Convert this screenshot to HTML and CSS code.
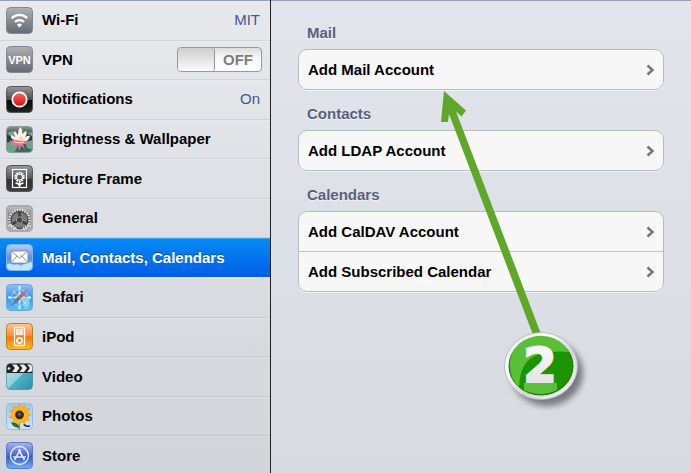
FILE: index.html
```html
<!DOCTYPE html>
<html lang="en">
<head>
<meta charset="utf-8">
<title>Settings</title>
<link rel="stylesheet" href="styles.css">
</head>
<body>
<svg class="defs" width="0" height="0" aria-hidden="true">
  <defs>
    <linearGradient id="grey" x2="0" y2="1"><stop offset="0" stop-color="#b0b1b4"/><stop offset=".5" stop-color="#888b90"/><stop offset="1" stop-color="#626b77"/></linearGradient>
    <linearGradient id="black" x2="0" y2="1"><stop offset="0" stop-color="#999"/><stop offset=".5" stop-color="#4b4b4b"/><stop offset=".52" stop-color="#080808"/><stop offset="1" stop-color="#222"/></linearGradient>
    <linearGradient id="frame" x2="0" y2="1"><stop offset="0" stop-color="#999"/><stop offset=".5" stop-color="#555"/><stop offset=".52" stop-color="#333"/><stop offset="1" stop-color="#3c3c3c"/></linearGradient>
    <linearGradient id="steel" x2="0" y2="1"><stop offset="0" stop-color="#c8c8c8"/><stop offset=".5" stop-color="#777"/><stop offset="1" stop-color="#bbb"/></linearGradient>
    <linearGradient id="sky" x2="0" y2="1"><stop offset="0" stop-color="#bfd2f5"/><stop offset=".5" stop-color="#5e94e8"/><stop offset="1" stop-color="#66c8ee"/></linearGradient>
    <linearGradient id="ocean" x2="0" y2="1"><stop offset="0" stop-color="#8dc0fb"/><stop offset=".5" stop-color="#3b93ee"/><stop offset="1" stop-color="#5cc5f7"/></linearGradient>
    <linearGradient id="orange" x2="0" y2="1"><stop offset="0" stop-color="#ffc79a"/><stop offset=".48" stop-color="#fb8b35"/><stop offset=".52" stop-color="#f77509"/><stop offset="1" stop-color="#ffc11c"/></linearGradient>
    <linearGradient id="teal" x2="1" y2="1"><stop offset="0" stop-color="#b5e6ee"/><stop offset=".5" stop-color="#8fd0de"/><stop offset=".52" stop-color="#4fb0c6"/><stop offset="1" stop-color="#2b8faa"/></linearGradient>
    <linearGradient id="pale" x2="0" y2="1"><stop offset="0" stop-color="#9cc9f2"/><stop offset="1" stop-color="#cfe5fa"/></linearGradient>
    <linearGradient id="store" x2="0" y2="1"><stop offset="0" stop-color="#a9b5ef"/><stop offset=".48" stop-color="#5067d4"/><stop offset=".52" stop-color="#3554cc"/><stop offset="1" stop-color="#6fb2f5"/></linearGradient>
    <linearGradient id="pond" x2="0" y2="1"><stop offset="0" stop-color="#8a9c98"/><stop offset=".4" stop-color="#223b36"/><stop offset="1" stop-color="#3d7463"/></linearGradient>
    <linearGradient id="red" x2="0" y2="1"><stop offset="0" stop-color="#f07070"/><stop offset="1" stop-color="#d0090b"/></linearGradient>
    <linearGradient id="silver" x2="1" y2="1"><stop offset="0" stop-color="#d8d8d8"/><stop offset=".3" stop-color="#fff"/><stop offset=".6" stop-color="#d4d4d6"/><stop offset="1" stop-color="#fff"/></linearGradient>
    <linearGradient id="numeral" x2="0" y2="1"><stop offset="0" stop-color="#fff"/><stop offset="1" stop-color="#dedee0"/></linearGradient>
    <clipPath id="tile"><rect x=".5" y=".5" width="26" height="26" rx="4"/></clipPath>
    <filter id="shade" x="-30%" y="-30%" width="170%" height="170%"><feGaussianBlur stdDeviation="3"/></filter>
  </defs>
</svg>
<div class="app">
  <nav class="sidebar" aria-label="Settings">
    <ul class="menu">
      <li class="item">
        <svg class="icon" viewBox="0 0 27 27"><rect x=".5" y=".5" width="26" height="26" rx="4" fill="url(#grey)" stroke="#85888d"/><g fill="none" stroke="#fff" stroke-width="2.3"><path d="M5.700 11.200a11 11 0 0 1 15.600 0M9 15a6.400 6.400 0 0 1 9 0"/></g><path d="M13.500 20.500l-2.600-2.800a4 4 0 0 1 5.200 0z" fill="#fff"/></svg>
        <a class="name" href="#wifi">Wi-Fi</a><span class="value">MIT</span>
      </li>
      <li class="item">
        <svg class="icon" viewBox="0 0 27 27"><rect x=".5" y=".5" width="26" height="26" rx="4" fill="url(#grey)" stroke="#85888d"/><text class="vpn" x="13.500" y="18" text-anchor="middle">VPN</text></svg>
        <label class="name" for="vpn">VPN</label>
        <span class="switch"><input class="switch-input" type="checkbox" id="vpn"><span class="knob"></span><span class="state">OFF</span></span>
      </li>
      <li class="item">
        <svg class="icon" viewBox="0 0 27 27"><rect x=".5" y=".5" width="26" height="26" rx="4" fill="url(#black)" stroke="#555"/><circle cx="13.500" cy="13.500" r="7.200" fill="url(#red)" stroke="#fff" stroke-width="1.800"/></svg>
        <a class="name" href="#notifications">Notifications</a><span class="value">On</span>
      </li>
      <li class="item">
        <svg class="icon" viewBox="0 0 27 27"><g clip-path="url(#tile)"><rect width="27" height="27" fill="url(#pond)"/><path d="M0 17l7-2 5 5-4 7H0zM19 16l8-2v10l-6-2z" fill="#68a58a"/><path d="M1 7l6-2 3 3-5 3zM21 7l6-1v5z" fill="#7fa08a"/><path d="M14 16L6 13Q4 10 6 9l3 2Q7 6 9 5l3 4q0-6 2.500-8Q17 4 16.500 8q2-3 4-3 .5 3-1 6 3-2 4.500-1-1 5-6 6z" fill="#fbeef0"/><path d="M15 9l2.500 5-3 2-2.500-2z" fill="#f5dd9a"/><path d="M4 15q5-2 10 0 5-1 9 1-3 3-6 2l2 5-4-3-2 5-1-6q-5 2-8-4z" fill="#e5748f"/><path d="M8 15.500l5 1.500 5-1" fill="none" stroke="#fbd6dc" stroke-width="1.200"/></g><rect x=".5" y=".5" width="26" height="26" rx="4" fill="none" stroke="#8d9c9a"/></svg>
        <a class="name" href="#brightness">Brightness &amp; Wallpaper</a>
      </li>
      <li class="item">
        <svg class="icon" viewBox="0 0 27 27"><rect x=".5" y=".5" width="26" height="26" rx="4" fill="url(#frame)" stroke="#555"/><rect x="6.500" y="4.500" width="14" height="18" fill="none" stroke="#fff" stroke-width="1.200"/><circle cx="13.500" cy="12" r="4" fill="none" stroke="#fff" stroke-width="2.400" stroke-dasharray="1.800 .7"/><circle cx="13.500" cy="12" r="3" fill="none" stroke="#fff"/><path d="M13.500 16v6M9.500 18q3 0 4 3 1-3 4-3" fill="none" stroke="#fff" stroke-width="1.300"/></svg>
        <a class="name" href="#frame">Picture Frame</a>
      </li>
      <li class="item">
        <svg class="icon" viewBox="0 0 27 27"><g clip-path="url(#tile)"><rect width="27" height="27" fill="url(#steel)"/><circle cx="13.500" cy="15" r="10" fill="#555" stroke="#e8e8e8" stroke-width="2.500" stroke-dasharray="1.300 1.300"/><circle cx="13.500" cy="15" r="8.300" fill="#7c7c7c" stroke="#444"/><path d="M13.500 15V7M13.500 15l-7 4M13.500 15l7 4" stroke="#3c3c3c" stroke-width="2.500"/><circle cx="13.500" cy="15" r="3.200" fill="#444" stroke="#999"/><path d="M2 21q6-2 9 5M25 21q-6-2-9 5" fill="none" stroke="#ddd" stroke-width="2" stroke-dasharray="1.500 1"/></g><rect x="1" y="1" width="25" height="25" rx="4" fill="none" stroke="#aaa" stroke-width="2"/></svg>
        <a class="name" href="#general">General</a>
      </li>
      <li class="item selected">
        <svg class="icon" viewBox="0 0 27 27"><g clip-path="url(#tile)"><rect width="27" height="27" fill="url(#sky)"/><path d="M0 21q4-3 8 0 4-2 7 1 5-4 12-4v9H0z" fill="#d7effb" opacity=".8"/></g><rect x="5" y="7" width="17" height="12" rx="1" fill="#fafafa" stroke="#777" stroke-width=".7"/><path d="M5 7l8.500 7L22 7M5 19l6-7M22 19l-6-7" fill="none" stroke="#888" stroke-width=".9"/><rect x=".5" y=".5" width="26" height="26" rx="4" fill="none" stroke="#7eb2ec"/></svg>
        <a class="name" href="#mail" aria-current="page">Mail, Contacts, Calendars</a>
      </li>
      <li class="item">
        <svg class="icon" viewBox="0 0 27 27"><rect x=".5" y=".5" width="26" height="26" rx="4" fill="url(#ocean)" stroke="#6ca6dc"/><path d="M16 15l7-1 1 6-4 6-3-5z" fill="#79d6e6"/><path d="M13.500 4l1.500 8 8 1.500-8 1.500-1.500 8-1.500-8-8-1.500 8-1.500z" fill="#d8efff"/><path d="M7 7l13 13M20 7L7 20" stroke="#d8efff" stroke-width=".8"/><circle cx="13.500" cy="13.500" r="8" fill="none" stroke="#bfe0ff" stroke-width=".7"/><path d="M13.500 2v3M13.500 22v3M2 13.500h3M22 13.500h3" stroke="#fff" stroke-width="1.800"/><path d="M22.500 4.500L15 15l-3-3z" fill="#e0623c"/><path d="M4.500 22.500L12 12l3 3z" fill="#6d7480"/></svg>
        <a class="name" href="#safari">Safari</a>
      </li>
      <li class="item">
        <svg class="icon" viewBox="0 0 27 27"><rect x=".5" y=".5" width="26" height="26" rx="4" fill="url(#orange)" stroke="#b98216"/><rect x="8.500" y="4.500" width="10" height="18" rx="1" fill="none" stroke="#fff" stroke-width="1.300"/><rect x="10" y="6" width="7" height="6" fill="#ffe9d4"/><circle cx="13.500" cy="17.500" r="2.600" fill="none" stroke="#fff" stroke-width="1.700"/></svg>
        <a class="name" href="#ipod">iPod</a>
      </li>
      <li class="item">
        <svg class="icon" viewBox="0 0 27 27"><g clip-path="url(#tile)"><rect width="27" height="27" fill="url(#teal)"/><path d="M0 0h27v10H0z" fill="#222"/><path d="M6 1.500h4.500l3 3.500-3 4H6l3-4zM13.500 1.500H18l3 3.500-3 4h-4.500l3-4zM21 1.500h4l2 2.500v2l-2 3h-4l3-4z" fill="#eee"/><circle cx="3" cy="5.500" r="1.300" fill="#eee"/></g><rect x=".5" y=".5" width="26" height="26" rx="4" fill="none" stroke="#417f91" stroke-opacity=".6"/></svg>
        <a class="name" href="#video">Video</a>
      </li>
      <li class="item">
        <svg class="icon" viewBox="0 0 27 27"><rect x=".5" y=".5" width="26" height="26" rx="4" fill="url(#pale)" stroke="#91bde4"/><path d="M13 17v9M12 24q-4 0-6-4 5 0 6 4" fill="#2f7c2b" stroke="#27672b" stroke-width="1.300"/><path d="M18 21q1 3 6 2" fill="none" stroke="#222" stroke-width="1.300"/><path d="M13.500 1l2 3.500 3.500-2.500.2 4.200 4.300-.7-2 3.800 3.500 2.700-4 1.500 2.200 4-4.500-.5v4l-3.500-2.200-2.500 3.200-2-3.700-4 1.200.7-4.500-4.200-.5 3-3.200-3-3.300 4.300-.7-.7-4.300 4 1.500z" fill="#ffb31a" stroke="#f0980e" stroke-width=".6"/><circle cx="13.500" cy="11.800" r="4.400" fill="#33281d"/><circle cx="13.500" cy="11.500" r="2" fill="#5d5348"/></svg>
        <a class="name" href="#photos">Photos</a>
      </li>
      <li class="item">
        <svg class="icon" viewBox="0 0 27 27"><rect x=".5" y=".5" width="26" height="26" rx="4" fill="url(#store)" stroke="#5a78c8"/><circle cx="13.500" cy="13.500" r="9" fill="none" stroke="#e4ecff" stroke-width="1.400"/><path d="M14.500 7.500L8.500 18M12.500 7.500l6 10.500M7 15h13" fill="none" stroke="#e4ecff" stroke-width="1.600"/></svg>
        <a class="name" href="#store">Store</a>
      </li>
    </ul>
  </nav>
  <main class="detail">
    <section class="group">
      <h2 class="heading">Mail</h2>
      <div class="card">
        <button class="action" type="button">Add Mail Account<svg class="chevron" viewBox="0 0 9 12"><path d="M1.500 1.500L6.500 6l-5 4.500"/></svg></button>
      </div>
    </section>
    <section class="group">
      <h2 class="heading">Contacts</h2>
      <div class="card">
        <button class="action" type="button">Add LDAP Account<svg class="chevron" viewBox="0 0 9 12"><path d="M1.500 1.500L6.500 6l-5 4.500"/></svg></button>
      </div>
    </section>
    <section class="group">
      <h2 class="heading">Calendars</h2>
      <div class="card">
        <button class="action" type="button">Add CalDAV Account<svg class="chevron" viewBox="0 0 9 12"><path d="M1.500 1.500L6.500 6l-5 4.500"/></svg></button>
        <button class="action" type="button">Add Subscribed Calendar<svg class="chevron" viewBox="0 0 9 12"><path d="M1.500 1.500L6.500 6l-5 4.500"/></svg></button>
      </div>
    </section>
    <svg class="callout" viewBox="0 0 160 330" role="img" aria-label="Step 2">
      <path d="M14 11L36 30.500L31.500 36.500L26 31.500L111 254L103.500 256L19 34L18 42H11z" fill="#5fa728"/>
      <ellipse cx="117" cy="293" rx="36" ry="33" fill="#555a62" opacity=".75" filter="url(#shade)"/>
      <ellipse cx="111" cy="286" rx="36.500" ry="33.500" fill="url(#silver)" stroke="#b4b4b6" stroke-width=".8"/>
      <ellipse cx="111" cy="286" rx="32" ry="29" fill="#1d9300" stroke="#187508"/>
      <path d="M80 286a31 28 0 0 1 59-14q-18-2-32 3-17 6-18 32-9-8-9-21z" fill="#5abf38"/>
      <path d="M94 303h33v7q-16 8-33 0z" fill="#5cbf3b"/>
      <text class="step" x="110" y="302" text-anchor="middle" fill="url(#numeral)" stroke="url(#numeral)">2</text>
    </svg>
  </main>
</div>
</body>
</html>
```

FILE: styles.css
```css
* { box-sizing: border-box; }

body {
  margin: 0;
  font-family: "Liberation Sans", Arial, sans-serif;
  font-size: 15px;
  line-height: 18px;
  color: #000;
}

.defs { position: absolute; }

.app {
  display: grid;
  grid-template-columns: minmax(240px, 271px) 1fr;
  height: 100vh;
  overflow: hidden;
  background: linear-gradient(#e2e5eb, #d7dae0);
  box-shadow: inset 0 1px #979eb2;
}

.sidebar {
  border-right: 1px solid #222;
}

.menu {
  display: grid;
  grid-auto-rows: minmax(38px, 1fr);
  min-height: calc(100vh + 3px);
  margin: 0;
  padding: 1px 0 0;
  list-style: none;
  background: linear-gradient(#e7e9ed, #d1d4da);
  box-shadow: inset 0 1px #979eb2;
}

.item {
  display: flex;
  align-items: center;
  gap: 9px;
  padding: 0 10px 0 6px;
  border-bottom: 1px solid rgba(0, 0, 0, 0.08);
  box-shadow: inset 0 1px rgba(255, 255, 255, 0.2);
}

.icon {
  flex: none;
  width: 27px;
  height: 27px;
}

.vpn {
  font-size: 11px;
  font-weight: bold;
  fill: #fff;
}

.name {
  flex: 1;
  font-weight: bold;
  color: inherit;
  text-decoration: none;
  white-space: nowrap;
}

.value {
  font-size: 15px;
  color: #3d598f;
}

.selected {
  color: #fff;
  text-shadow: 0 -1px rgba(0, 0, 0, 0.4);
  background: linear-gradient(#058cf5, #015de6);
  border-bottom-color: #e2e7f0;
}

.switch {
  position: relative;
  display: flex;
  width: 85px;
  height: 25px;
  margin-right: -2px;
  overflow: hidden;
  border: 1px solid #999;
  border-radius: 4px;
  background: linear-gradient(#ddd, #f6f6f6 40%, #fff);
}

.switch-input {
  position: absolute;
  inset: 0;
  width: 100%;
  height: 100%;
  margin: 0;
  opacity: 0;
}

.knob {
  width: 37px;
  border-right: 1px solid #999;
  border-radius: 3px;
  background: linear-gradient(#cecece, #fbfbfb);
}

.state {
  flex: 1;
  font-size: 15px;
  font-weight: bold;
  line-height: 24px;
  text-align: center;
  color: #7e7e7e;
}

.detail {
  position: relative;
  padding: 17px 27px;
}

.heading {
  margin: 0;
  padding: 7px 9px;
  font-size: 15px;
  line-height: 18px;
  color: #56617a;
  text-shadow: 0 1px rgba(255, 255, 255, 0.7);
}

.group + .group { margin-top: 8px; }

.card {
  overflow: hidden;
  border: 1px solid #b9bbc1;
  border-radius: 9px;
  background: #f7f7f7;
  box-shadow: 0 1px #f2f3f5;
}

.action {
  display: flex;
  align-items: center;
  justify-content: space-between;
  width: 100%;
  height: 39px;
  padding: 0 8px 0 9px;
  border: 0;
  background: none;
  font: inherit;
  font-weight: bold;
  color: #000;
  text-align: left;
}

.action + .action {
  height: 40px;
  border-top: 1px solid #c4c4c6;
}

.chevron {
  width: 9px;
  height: 12px;
  fill: none;
  stroke: #777;
  stroke-width: 2.5;
}

.callout {
  position: absolute;
  top: 80px;
  left: 159px;
  width: 160px;
  height: 330px;
  pointer-events: none;
}

.step {
  font-family: "DejaVu Sans", sans-serif;
  font-size: 48px;
  font-weight: bold;
  stroke-width: 2;
}
```
